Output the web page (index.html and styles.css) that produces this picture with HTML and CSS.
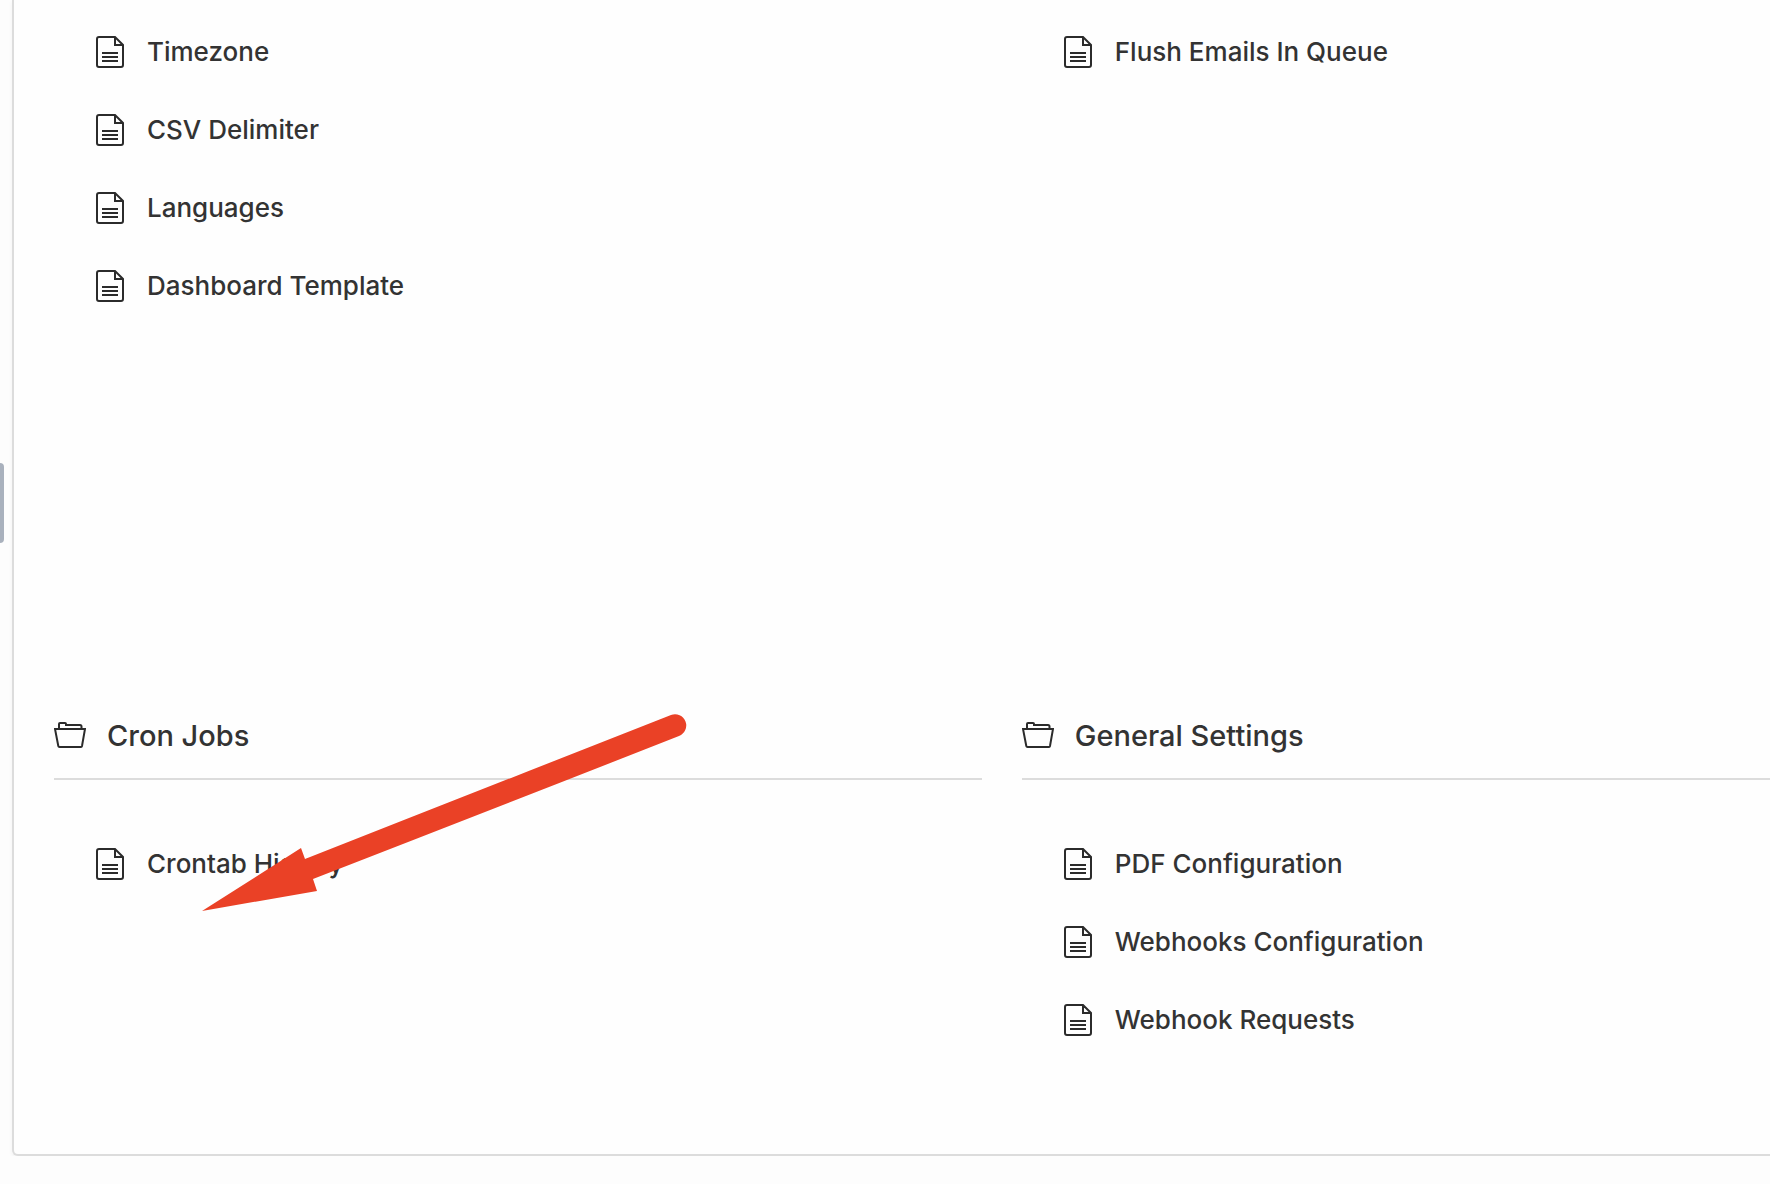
FILE: index.html
```html
<!DOCTYPE html>
<html lang="en">
<head>
  <meta charset="UTF-8" />
  <title>Settings</title>
  <link rel="stylesheet" href="styles.css">
</head>
<body>
  <!-- Shared icons -->
  <svg class="sprite" aria-hidden="true">
    <symbol id="file" viewBox="0 0 28 32">
      <path d="M3 1H19L27 9V29Q27 31 25 31H3Q1 31 1 29V3Q1 1 3 1Z M19 1V9H27 M6 17H22 M6 21H22 M6 25H22" />
    </symbol>
    <symbol id="folder" viewBox="0 0 32 26">
      <path d="M5 7V2Q5 1 6 1H11Q12 1 12 2V3H26Q27.500 3 27.500 4.500V7 M1 7H31L28 24Q27.800 25 27 25H5.500Q4.500 25 4.300 24Z" />
    </symbol>
  </svg>

  <button class="sidebar-handle" aria-label="Toggle sidebar"></button>

  <main class="panel">
    <section class="group">
      <ul class="links">
        <li><a href="#"><svg class="file-icon"><use href="#file" /></svg>Timezone</a></li>
        <li><a href="#"><svg class="file-icon"><use href="#file" /></svg>CSV Delimiter</a></li>
        <li><a href="#"><svg class="file-icon"><use href="#file" /></svg>Languages</a></li>
        <li><a href="#"><svg class="file-icon"><use href="#file" /></svg>Dashboard Template</a></li>
      </ul>
    </section>

    <section class="group">
      <ul class="links">
        <li><a href="#"><svg class="file-icon"><use href="#file" /></svg>Flush Emails In Queue</a></li>
      </ul>
    </section>

    <section class="group">
      <h2><svg class="folder-icon"><use href="#folder" /></svg>Cron Jobs</h2>
      <ul class="links">
        <li><a href="#"><svg class="file-icon"><use href="#file" /></svg>Crontab History</a></li>
      </ul>
      <svg class="arrow" viewBox="0 0 486 200" aria-hidden="true">
        <path d="M0 197L99 134L103 145Q286 73 469 1A11 11 0 0 1 477 22Q294 94 111 165L115 177Z" />
      </svg>
    </section>

    <section class="group">
      <h2><svg class="folder-icon"><use href="#folder" /></svg>General Settings</h2>
      <ul class="links">
        <li><a href="#"><svg class="file-icon"><use href="#file" /></svg>PDF Configuration</a></li>
        <li><a href="#"><svg class="file-icon"><use href="#file" /></svg>Webhooks Configuration</a></li>
        <li><a href="#"><svg class="file-icon"><use href="#file" /></svg>Webhook Requests</a></li>
      </ul>
    </section>
  </main>
</body>
</html>
```
FILE: styles.css
```css
* {
  box-sizing: border-box;
}

body {
  margin: 0;
  background: #fdfdfd;
  color: #333;
  font-family: Inter, "Liberation Sans", sans-serif;
}

.sprite {
  display: none;
}

.sidebar-handle {
  position: fixed;
  left: 0;
  top: 463px;
  width: 4px;
  height: 80px;
  padding: 0;
  border: none;
  border-radius: 0 4px 4px 0;
  background: #a9b1bd;
  cursor: pointer;
}

/* Open on the right, the second column runs to the window edge */
.panel {
  display: grid;
  grid-template-columns: 1.24fr 1fr;
  column-gap: 40px;
  row-gap: 367px;
  margin-left: 12px;
  padding: 13px 0 95px 40px;
  background: #fefefe;
  border: 2px solid #dcdcdc;
  border-top: none;
  border-right: none;
  border-radius: 0 0 0 6px;
  box-shadow: 0 2px 4px rgba(0, 0, 0, 0.05);
}

.group {
  position: relative;
}

h2 {
  display: flex;
  align-items: center;
  gap: 21px;
  height: 88px;
  margin: 0 0 45px;
  border-bottom: 2px solid #dcdcdc;
  font-size: 29px;
  font-weight: 500;
}

.links {
  margin: 0;
  padding: 0 0 0 42px;
  list-style: none;
}

.links a {
  display: flex;
  align-items: center;
  gap: 23px;
  height: 78px;
  color: #333;
  font-size: 26px;
  font-weight: 500;
  line-height: 30px;
  text-decoration: none;
}

.file-icon,
.folder-icon {
  fill: none;
  stroke: #2b2b2b;
  stroke-width: 2;
}

.file-icon {
  width: 28px;
  height: 32px;
}

.folder-icon {
  width: 32px;
  height: 26px;
}

.arrow {
  position: absolute;
  left: 148px;
  top: 22px;
  width: 486px;
  height: 200px;
  fill: #ea4126;
  pointer-events: none;
}
```
